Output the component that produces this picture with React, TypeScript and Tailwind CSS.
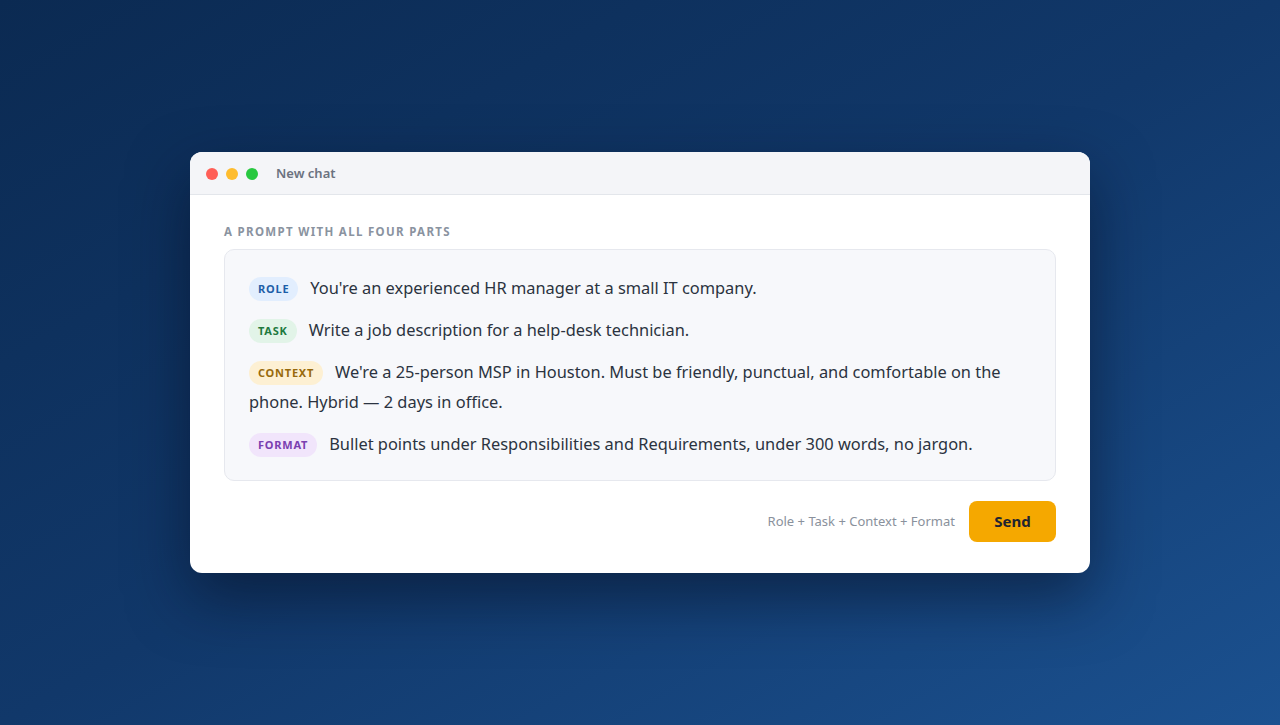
import React from "react";

const Badge = ({ label, cls }: { label: string; cls: string }) => (
  <span
    className={`inline-flex items-center h-[24px] px-[9px] rounded-full text-[11px] font-bold tracking-[0.07em] align-[1px] mr-[12px] ${cls}`}
  >
    {label}
  </span>
);

export default function App() {
  return (
    <div
      className="w-[1280px] h-[725px] flex items-center justify-center bg-gradient-to-br from-[#0b2a52] via-[#11386a] to-[#1b5190]"
      style={{ fontFamily: '"Noto Sans", "Open Sans", sans-serif' }}
    >
      <div className="w-[900px] h-[421px] bg-white rounded-[12px] overflow-hidden shadow-[0_24px_60px_rgba(5,15,35,0.55)] flex flex-col">
        <div className="h-[43px] shrink-0 bg-[#f4f5f8] border-b border-[#e3e6eb] flex items-center pl-[16px] pt-[1px]">
          <div className="flex gap-[8px]">
            <span className="w-[12px] h-[12px] rounded-full bg-[#ff5f57]" />
            <span className="w-[12px] h-[12px] rounded-full bg-[#febc2e]" />
            <span className="w-[12px] h-[12px] rounded-full bg-[#28c840]" />
          </div>
          <span className="ml-[18px] text-[13px] font-semibold text-[#6b7280]">New chat</span>
        </div>
        <div className="flex-1 px-[34px] pt-[30px] flex flex-col">
          <div className="text-[11.5px] font-bold tracking-[0.115em] text-[#8a93a0] leading-[14px]">
            A PROMPT WITH ALL FOUR PARTS
          </div>
          <div className="mt-[10px] bg-[#f7f8fb] border border-[#e6e8ee] rounded-[10px] px-[24px] pt-[23px] pb-[21px] flex flex-col gap-[12px] text-[16.4px] leading-[30px] text-[#2b3340]">
            <p>
              <Badge label="ROLE" cls="bg-[#e2eefe] text-[#1d5ea8]" />
              You're an experienced HR manager at a small IT company.
            </p>
            <p>
              <Badge label="TASK" cls="bg-[#e2f4e8] text-[#1f7a40]" />
              Write a job description for a help-desk technician.
            </p>
            <p>
              <Badge label="CONTEXT" cls="bg-[#fdf0d3] text-[#986a0c]" />
              We're a 25-person MSP in Houston. Must be friendly, punctual, and comfortable on the phone. Hybrid — 2 days in office.
            </p>
            <p>
              <Badge label="FORMAT" cls="bg-[#f1e5fb] text-[#7a40b0]" />
              Bullet points under Responsibilities and Requirements, under 300 words, no jargon.
            </p>
          </div>
          <div className="mt-[20px] flex items-center justify-end gap-[14px]">
            <span className="text-[13px] text-[#8a919c]">Role + Task + Context + Format</span>
            <button className="w-[87px] h-[41px] rounded-[8px] bg-[#f5a800] text-[15px] font-bold text-[#1f2430]">
              Send
            </button>
          </div>
        </div>
      </div>
    </div>
  );
}
